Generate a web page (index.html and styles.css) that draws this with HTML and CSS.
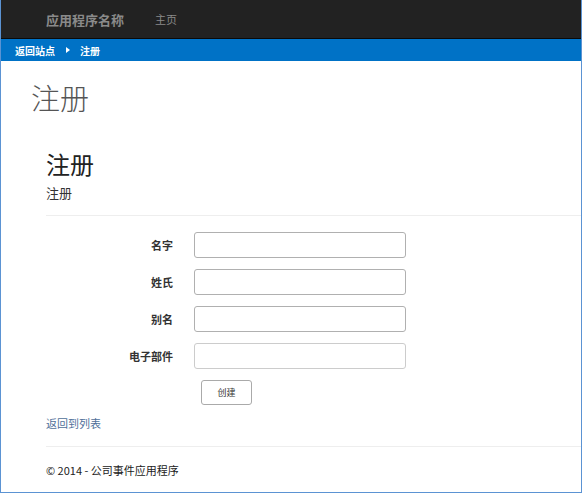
FILE: index.html
```html
<!DOCTYPE html>
<html lang="zh-CN">
<head>
<meta charset="utf-8">
<title>注册</title>
<link rel="stylesheet" href="styles.css">
</head>
<body>
<div class="frame">
  <nav class="navbar">
    <span class="brand">应用程序名称</span>
    <span class="nav-link">主页</span>
  </nav>
  <div class="crumbs">
    <span class="crumb">返回站点</span>
    <svg class="crumb-arrow" width="4" height="6" viewBox="0 0 4 6"><path d="M0 0 L4 3 L0 6 Z" fill="#fff"/></svg>
    <span class="crumb">注册</span>
  </div>
  <main class="page">
    <h1 class="page-title">注册</h1>
    <section class="body">
      <h2 class="form-title">注册</h2>
      <h4 class="form-sub">注册</h4>
      <hr class="rule">
      <form class="form">
        <div class="row"><label class="label">名字</label><input class="input" type="text"></div>
        <div class="row"><label class="label">姓氏</label><input class="input" type="text"></div>
        <div class="row"><label class="label">别名</label><input class="input" type="text"></div>
        <div class="row"><label class="label">电子部件</label><input class="input input-plain" type="text"></div>
        <div class="row"><span class="label"></span><button class="btn" type="button">创建</button></div>
      </form>
      <a class="back" href="#">返回到列表</a>
      <hr class="rule rule-foot">
      <footer class="footer">© 2014 - 公司事件应用程序</footer>
    </section>
  </main>
</div>
</body>
</html>
```

FILE: styles.css
```css
html, body {
  margin: 0;
  padding: 0;
  background: #fff;
}
body {
  font-family: "Noto Sans CJK SC", "Liberation Sans", sans-serif;
  color: #333;
}
.frame {
  width: 580px;
  height: 492px;
  border-left: 1px solid #5b93d3;
  border-right: 1px solid #5b93d3;
  border-bottom: 1px solid #5b93d3;
  overflow: hidden;
}
.navbar {
  height: 38px;
  background: #222;
  border-bottom: 1px solid #0a0a0a;
  display: flex;
  align-items: center;
  padding-left: 45px;
}
.brand {
  font-size: 13px;
  color: #8a8a8a;
  font-weight: 700;
}
.nav-link {
  margin-left: 31px;
  font-size: 11px;
  color: #8a8a8a;
}
.crumbs {
  height: 22px;
  background: #0072c6;
  display: flex;
  align-items: center;
  padding-left: 14px;
}
.crumb {
  color: #fff;
  font-size: 10px;
  font-weight: 700;
}
.crumb-arrow {
  margin-left: 11px;
  margin-right: 10px;
}
.page {
  padding-left: 30px;
}
.page-title {
  margin: 18px 0 0 0;
  font-size: 29px;
  line-height: 36px;
  font-weight: 300;
  color: #555;
}
.body {
  padding-left: 15px;
}
.form-title {
  margin: 34px 0 0 0;
  font-size: 24px;
  line-height: 30px;
  font-weight: 400;
  color: #222;
}
.form-sub {
  margin: 5px 0 0 0;
  font-size: 13px;
  line-height: 18px;
  font-weight: 400;
  color: #333;
}
.rule {
  margin: 13px 0 0 0;
  border: 0;
  border-top: 1px solid #eee;
}
.form {
  margin-top: 16px;
  display: flex;
  flex-direction: column;
  gap: 11px;
}
.row {
  display: flex;
  align-items: center;
}
.label {
  width: 127px;
  text-align: right;
  font-size: 11px;
  font-weight: 700;
  color: #333;
  margin-right: 21px;
}
.input {
  width: 212px;
  height: 26px;
  box-sizing: border-box;
  border: 1px solid #b0b0b0;
  border-radius: 3px;
  padding: 0;
  margin: 0;
  background: #fff;
}
.input-plain {
  border-color: #ccc;
}
.btn {
  margin-left: 7px;
  width: 51px;
  height: 25px;
  box-sizing: border-box;
  border: 1px solid #aaa;
  border-radius: 3px;
  background: #fff;
  font-family: "Noto Sans CJK SC", sans-serif;
  font-size: 9px;
  color: #333;
  padding: 0;
}
.back {
  display: block;
  margin-top: 10px;
  font-size: 11px;
  line-height: 16px;
  color: #4f6f99;
  text-decoration: none;
}
.rule-foot {
  margin-top: 15px;
}
.footer {
  margin-top: 15px;
  font-size: 11px;
  color: #222;
}
```
